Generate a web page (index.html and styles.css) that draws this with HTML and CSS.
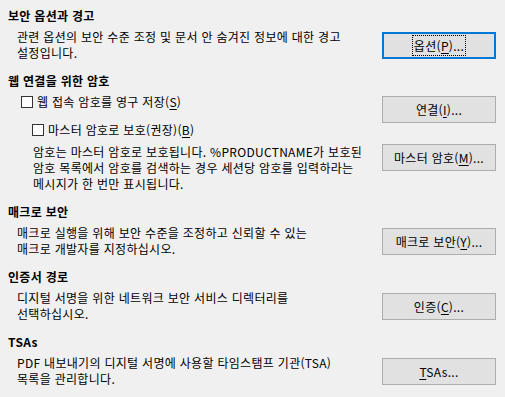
FILE: index.html
```html
<!DOCTYPE html>
<html lang="ko">
<head>
  <meta charset="UTF-8">
  <title>보안</title>
  <link rel="stylesheet" href="styles.css">
</head>
<body>

<div class="security-page">

  <section class="group">
    <h3 class="group-title">보안 옵션과 경고</h3>
    <div class="group-row">
      <p class="desc">관련 옵션의 보안 수준 조정 및 문서 안 숨겨진 정보에 대한 경고<br>설정입니다.</p>
      <button class="btn btn-focus" type="button"><span class="focus-ring">옵션(<u>P</u>)...</span></button>
    </div>
  </section>

  <section class="group">
    <h3 class="group-title">웹 연결을 위한 암호</h3>
    <div class="group-row">
      <div class="options">
        <label class="check check-first"><span class="box"></span><span>웹 접속 암호를 영구 저장(<u>S</u>)</span></label>
        <label class="check check-sub"><span class="box"></span><span>마스터 암호로 보호(권장)(<u>B</u>)</span></label>
        <p class="desc desc-sub">암호는 마스터 암호로 보호됩니다. %PRODUCTNAME가 보호된<br>암호 목록에서 암호를 검색하는 경우 세션당 암호를 입력하라는<br>메시지가 한 번만 표시됩니다.</p>
      </div>
      <div class="btn-col">
        <button class="btn btn-connect" type="button">연결(<u>I</u>)...</button>
        <button class="btn btn-master" type="button">마스터 암호(<u>M</u>)...</button>
      </div>
    </div>
  </section>

  <section class="group">
    <h3 class="group-title">매크로 보안</h3>
    <div class="group-row">
      <p class="desc">매크로 실행을 위해 보안 수준을 조정하고 신뢰할 수 있는<br>매크로 개발자를 지정하십시오.</p>
      <button class="btn" type="button">매크로 보안(<u>Y</u>)...</button>
    </div>
  </section>

  <section class="group">
    <h3 class="group-title">인증서 경로</h3>
    <div class="group-row">
      <p class="desc">디지털 서명을 위한 네트워크 보안 서비스 디렉터리를<br>선택하십시오.</p>
      <button class="btn" type="button">인증(<u>C</u>)...</button>
    </div>
  </section>

  <section class="group">
    <h3 class="group-title">TSAs</h3>
    <div class="group-row">
      <p class="desc">PDF 내보내기의 디지털 서명에 사용할 타임스탬프 기관(TSA)<br>목록을 관리합니다.</p>
      <button class="btn" type="button"><u>T</u>SAs...</button>
    </div>
  </section>

</div>

</body>
</html>
```

FILE: styles.css
```css
body {
  margin: 0;
  background-color: #f0f0f0;
  color: #000;
  font-family: "Noto Sans CJK KR", "Noto Sans", sans-serif;
  font-size: 12px;
  line-height: 16px;
  letter-spacing: 0.3px;
}

.security-page {
  padding: 8px 9px 0 8px;
}

.group + .group {
  margin-top: 12px;
}

.group-title {
  margin: 0;
  font-size: 12px;
  font-weight: 700;
  line-height: 16px;
}

.group-row {
  display: flex;
  justify-content: space-between;
  align-items: flex-start;
  margin-top: 5px;
  padding-left: 9px;
}

.desc {
  margin: 0;
  white-space: nowrap;
}

.options {
  display: flex;
  flex-direction: column;
}

.check {
  display: flex;
  align-items: center;
  gap: 4px;
}

.check-first {
  margin-left: 4px;
}

.check-sub {
  margin-top: 12px;
  margin-left: 15px;
}

.box {
  width: 12px;
  height: 12px;
  box-sizing: border-box;
  border: 1px solid #333;
  background-color: #fff;
}

.desc-sub {
  margin-top: 6px;
  padding-left: 16px;
}

.btn-col {
  display: flex;
  flex-direction: column;
}

.btn {
  width: 114px;
  height: 27px;
  margin-top: 3px;
  padding: 0;
  flex-shrink: 0;
  box-sizing: border-box;
  background-color: #e1e1e1;
  border: 1px solid #adadad;
  border-radius: 0;
  color: #000;
  font-family: inherit;
  font-size: 12px;
  line-height: 16px;
  letter-spacing: 0.3px;
}

.btn-focus {
  border: 2px solid #0078d7;
}

.focus-ring {
  outline: 1px dotted #000;
  outline-offset: 1px;
}

.btn-connect {
  margin-top: 2px;
}

.btn-master {
  margin-top: 21px;
}

u {
  text-underline-offset: 2px;
}
```
